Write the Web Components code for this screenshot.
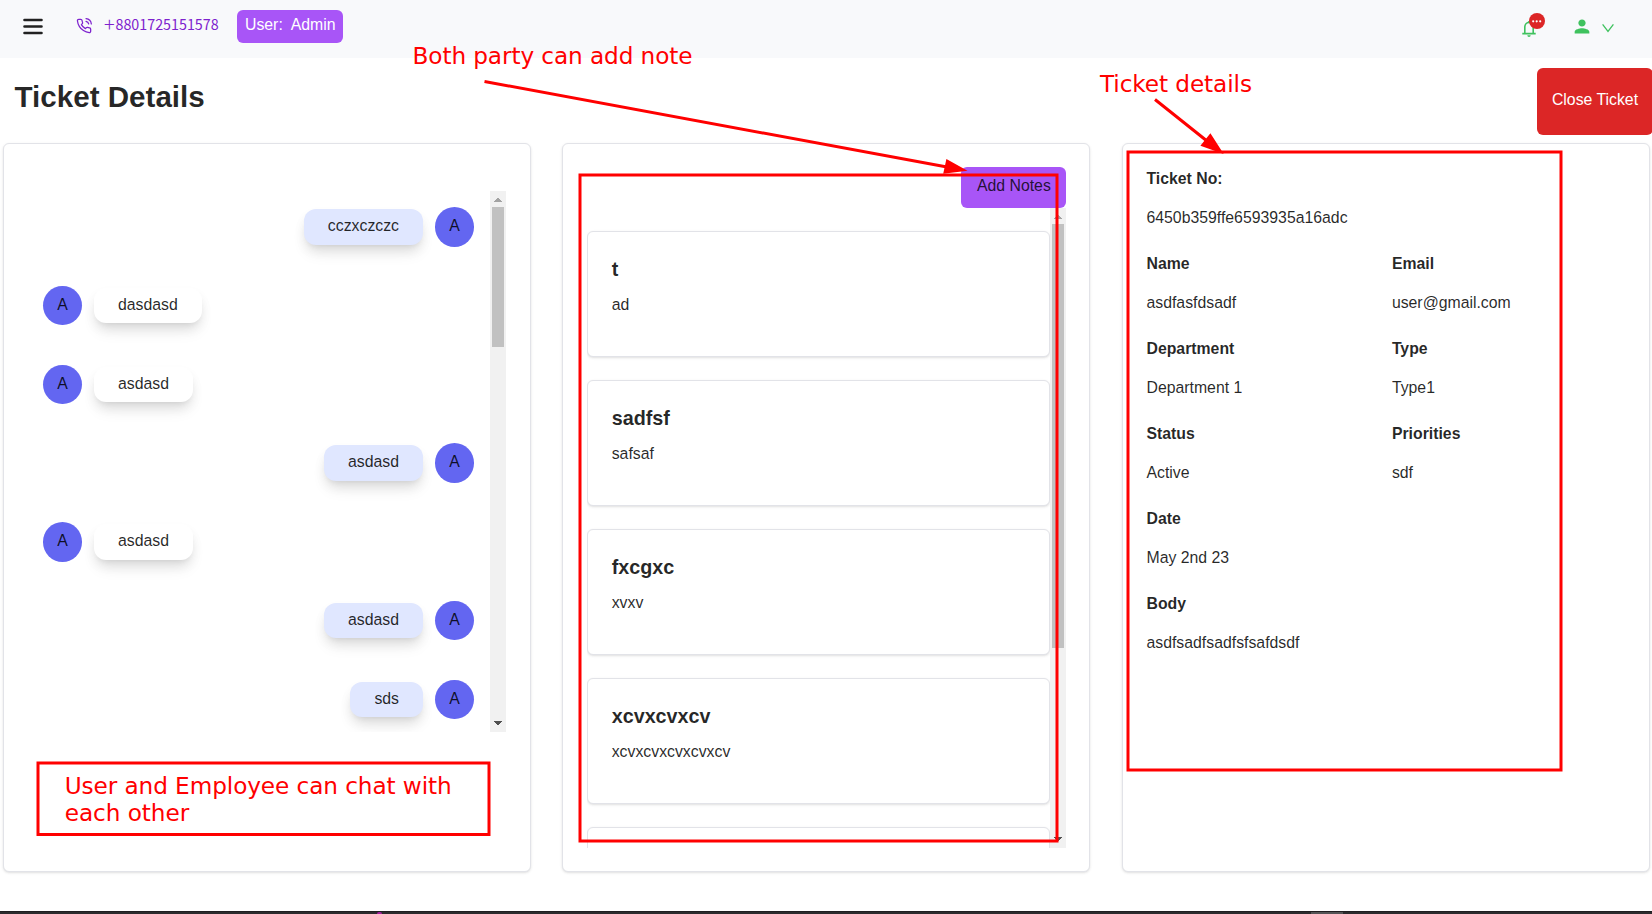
<!DOCTYPE html>
<html lang="en">
<head>
<meta charset="utf-8">
<title>Ticket Details</title>
<style>
  html, body { margin: 0; height: 914px; overflow: hidden; }
  body { font: 15.820px/24px "Liberation Sans", Arial, sans-serif; color: rgba(0,0,0,.85); background: #fff; }
</style>
</head>
<body>
<ticket-page></ticket-page>
<script>
const define = (name, html, setup) => {
  const tpl = document.createElement('template');
  tpl.innerHTML = html;
  customElements.define(name, class extends HTMLElement {
    constructor() {
      super();
      this.attachShadow({ mode: 'open' }).append(tpl.content.cloneNode(true));
    }
    connectedCallback() { if (setup) setup(this, this.shadowRoot); }
  });
};

define('scroll-track', `
<style>
  :host { display: flex; flex-direction: column; flex: 0 0 16px; width: 16px; background: #f1f1f1; }
  svg { display: block; flex: none; width: 16px; height: 16px; }
  .thumb { width: 12px; margin: 0 2px; height: var(--thumb); background: #c1c1c1; }
  .rest { flex: 1; }
</style>
<svg viewBox="0 0 16 16" shape-rendering="crispEdges"><path d="M4 11h8v-1h-1v-1h-1v-1h-1v-1h-2v1h-1v1h-1v1h-1z" fill="#a3a3a3"/></svg>
<div class="thumb"></div><div class="rest"></div>
<svg viewBox="0 0 16 16" shape-rendering="crispEdges"><path d="M4 5h8v1h-1v1h-1v1h-1v1h-2v-1h-1v-1h-1v-1h-1z" fill="#505050"/></svg>`);

define('app-header', `
<style>
  :host { display: flex; box-sizing: border-box; height: 58px; background: #f8f9fb; padding-left: 23px; align-items: flex-start; flex: none; }
  svg { display: block; flex: none; overflow: visible; }
  .menu { margin-top: 18px; }
  .phone { margin: 18px 0 0 33px; }
  .number { display: flex; margin: 12px 0 0 12px; width: 133px; font: 14.300px/24px "Noto Sans CJK JP", "Noto Sans CJK SC", sans-serif; color: #7e22ce; white-space: nowrap; }
  .plus { font-weight: 200; font-size: 20px; width: 11.500px; }
  .user { box-sizing: border-box; margin: 10px 0 0 0; height: 33px; width: 106px; padding: 2px 8px; border-radius: 6px; background: #a855f7; color: #fff; white-space: pre; line-height: 25px; }
  .bell { position: relative; margin: 19px 0 0 auto; }
  .badge { position: absolute; left: 7px; top: -6px; }
  .person { margin: 16px 0 0 35px; }
  .down { margin: 24px 0 0 9px; padding-right: 38px; }
</style>
<svg class="menu" width="20" height="17" viewBox="0 0 20 17" stroke="#212121" stroke-width="2.6" stroke-linecap="round"><path d="M1.5 2h17M1.5 8.5h17M1.5 15h17"/></svg>
<svg class="phone" width="16" height="16" viewBox="0 0 24 24" fill="none" stroke="#7e22ce" stroke-width="1.9" stroke-linecap="round" stroke-linejoin="round"><path d="M15.05 5A5 5 0 0 1 19 8.95M15.05 1A9 9 0 0 1 23 8.94m-1 7.98v3a2 2 0 0 1-2.18 2 19.79 19.79 0 0 1-8.63-3.07 19.5 19.5 0 0 1-6-6 19.79 19.79 0 0 1-3.07-8.67A2 2 0 0 1 4.11 2h3a2 2 0 0 1 2 1.72 12.84 12.84 0 0 0 .7 2.81 2 2 0 0 1-.45 2.11L8.09 9.91a16 16 0 0 0 6 6l1.27-1.27a2 2 0 0 1 2.11-.45 12.84 12.84 0 0 0 2.81.7A2 2 0 0 1 22 16.92z"/></svg>
<div class="number"><span class="plus">+</span><span>8801725151578</span></div>
<div class="user">User:  Admin</div>
<div class="bell">
  <svg width="14" height="18" viewBox="0 0 14 18"><path d="M2.8 14.5V8a4.2 4.6 0 0 1 8.4 0v6.5M0.3 14.6h13.4" fill="none" stroke="#3fc25e" stroke-width="1.6"/><path d="M7 2v1.6" stroke="#3fc25e" stroke-width="1.6"/><path d="M5.3 16.2h3.4a1.7 1.7 0 0 1-3.4 0z" fill="#3fc25e"/></svg>
  <svg class="badge" width="16" height="16" viewBox="0 0 16 16"><circle cx="8" cy="8" r="8" fill="#dc2626"/><g fill="#fff"><circle cx="4.2" cy="8.3" r="1.1"/><circle cx="7.7" cy="8.3" r="1.1"/><circle cx="11.2" cy="8.3" r="1.1"/></g></svg>
</div>
<svg class="person" width="22" height="21" viewBox="0 0 24 24" preserveAspectRatio="none"><path fill="#3fc25e" d="M12 12c2.21 0 4-1.79 4-4s-1.790-4-4-4-4 1.790-4 4 1.790 4 4 4zm0 2c-2.670 0-8 1.340-8 4v2h16v-2c0-2.660-5.330-4-8-4z"/></svg>
<svg class="down" width="12" height="9" viewBox="0 0 12 9"><path d="M.6.300l5.400 7.200 5.400-7.200" fill="none" stroke="#3fc25e" stroke-width="1.300"/></svg>`);

define('page-heading', `
<style>
  :host { display: flex; height: 85px; justify-content: space-between; flex: none; width: 1653px; }
  h1 { margin: 23px 0 0 14.500px; font-size: 29.600px; line-height: 32px; font-weight: 700; white-space: nowrap; }
  button { margin: 10px 0 0; width: 116px; height: 67px; border: 0; padding: 0 0 3px; border-radius: 6px; background: #dc2626; color: #fff; font: inherit; }
</style>
<h1><slot></slot></h1><button>Close Ticket</button>`);

define('panel-card', `
<style>
  :host { display: flex; flex-direction: column; box-sizing: border-box; border: 1px solid #e2e3e8; border-radius: 6px; background: #fff; box-shadow: 0 1px 3px rgba(0,0,0,.1), 0 1px 2px -1px rgba(0,0,0,.1); min-width: 0; }
</style><slot></slot>`);

define('chat-message', `
<style>
  :host { display: flex; align-items: center; gap: 12px; height: 39.500px; margin-bottom: 39.250px; flex: none; }
  :host([mine]) { flex-direction: row-reverse; }
  .avatar { box-sizing: border-box; width: 39px; height: 39.500px; border-radius: 50%; background: #6366f1; text-align: center; line-height: 38px; flex: none; }
  .bubble { box-sizing: border-box; height: 35.500px; padding: 0 24px; line-height: 34px; border-radius: 12px; background: #fff; box-shadow: 0 10px 15px -3px rgba(0,0,0,.1), 0 4px 6px -4px rgba(0,0,0,.1), 0 6px 12px rgba(0,0,0,.05); }
  :host([mine]) .bubble { background: #e0e7ff; }
</style>
<div class="avatar">A</div><div class="bubble"><slot></slot></div>`);

define('chat-panel', `
<style>
  :host { display: block; min-width: 0; }
  panel-card { height: 100%; padding: 47px 24px 0 23px; }
  .scroll { display: flex; height: 541px; }
  .list { flex: 1; padding: 16px; overflow: hidden; box-sizing: border-box; height: 541px; }
  scroll-track { --thumb: 140px; }
</style>
<panel-card><div class="scroll"><div class="list">
  <chat-message mine>cczxczczc</chat-message>
  <chat-message>dasdasd</chat-message>
  <chat-message>asdasd</chat-message>
  <chat-message mine>asdasd</chat-message>
  <chat-message>asdasd</chat-message>
  <chat-message mine>asdasd</chat-message>
  <chat-message mine>sds</chat-message>
</div><scroll-track></scroll-track></div></panel-card>`);

define('note-card', `
<style>
  :host { display: block; }
  panel-card { height: 126px; padding: 23px 23.300px 0; }
  h2 { margin: 0; font-size: 19.750px; line-height: 28px; font-weight: 700; }
  p { margin: 10px 0 0; line-height: 24px; }
</style>
<panel-card><h2></h2><p><slot></slot></p></panel-card>`, (el, root) => {
  root.querySelector('h2').textContent = el.getAttribute('heading');
});

define('notes-panel', `
<style>
  :host { display: block; min-width: 0; }
  panel-card { height: 100%; padding: 23px 23px 0 24px; }
  button { align-self: flex-end; flex: none; width: 105px; height: 41px; border: 0; border-radius: 6px; padding: 0 0 3px 0; background: #a855f7; font: inherit; color: rgba(0,0,0,.8); }
  .scroll { display: flex; height: 640px; }
  .list { flex: 1; padding-top: 23px; height: 617px; overflow: hidden; display: flex; flex-direction: column; gap: 23px; }
  note-card { flex: none; }
  scroll-track { --thumb: 424px; }
</style>
<panel-card><button>Add Notes</button>
<div class="scroll"><div class="list">
  <note-card heading="t">ad</note-card>
  <note-card heading="sadfsf">safsaf</note-card>
  <note-card heading="fxcgxc">xvxv</note-card>
  <note-card heading="xcvxcvxcv">xcvxcvxcvxcvxcv</note-card>
  <note-card heading=""></note-card>
</div><scroll-track></scroll-track></div></panel-card>`);

define('detail-field', `
<style>
  :host { display: block; height: 85px; }
  b, span { display: block; line-height: 24px; }
  b { margin-bottom: 15px; }
</style>
<b></b><span><slot></slot></span>`, (el, root) => {
  root.querySelector('b').textContent = el.getAttribute('label');
});

define('details-panel', `
<style>
  :host { display: block; min-width: 0; }
  panel-card { height: 100%; padding: 23px 24px 0 23.700px; }
  .grid { display: grid; grid-template-columns: 1fr 1fr; column-gap: 12.500px; }
  .wide { grid-column: 1 / -1; }
</style>
<panel-card><div class="grid">
  <detail-field class="wide" label="Ticket No:">6450b359ffe6593935a16adc</detail-field>
  <detail-field label="Name">asdfasfdsadf</detail-field>
  <detail-field label="Email">user@gmail.com</detail-field>
  <detail-field label="Department">Department 1</detail-field>
  <detail-field label="Type">Type1</detail-field>
  <detail-field label="Status">Active</detail-field>
  <detail-field label="Priorities">sdf</detail-field>
  <detail-field class="wide" label="Date">May 2nd 23</detail-field>
  <detail-field class="wide" label="Body">asdfsadfsadfsfsafdsdf</detail-field>
</div></panel-card>`);

define('dock-edge', `
<style>
  :host { display: flex; height: 3px; background: #2c2b2d; border-top: 0; flex: none; box-shadow: inset 0 1px #1f1e20; }
  .dot { width: 5px; height: 2px; margin: 1px 0 0 377px; border-radius: 3px 3px 0 0; background: #a61fa0; }
  .handle { width: 32px; height: 2px; margin: 1px 0 0 929px; background: #555456; }
</style>
<div class="dot"></div><div class="handle"></div>`);

define('markup-layer', `
<style>
  :host { position: absolute; left: 0; top: 0; width: 1652px; height: 914px; pointer-events: none; }
  svg { display: block; }
  text { font: 23.200px "DejaVu Sans", sans-serif; fill: #f00; }
</style>
<svg width="1652" height="914" viewBox="0 0 1652 914">
  <g fill="none" stroke="#f00" stroke-width="3">
    <rect x="38" y="763" width="451" height="71.500"/>
    <rect x="580" y="175" width="477" height="666"/>
    <rect x="1128" y="152" width="433" height="618"/>
    <path d="M484.500 81.500L947 167M1155 99.500L1207 141"/>
  </g>
  <path fill="#f00" d="M967.500 170.700L946.400 159 943.200 173.700zM1223.700 154L1210.400 133.300 1200.400 145.700z"/>
  <text x="412.500" y="64" textLength="280">Both party can add note</text>
  <text x="1100" y="92" textLength="152">Ticket details</text>
  <text x="64.700" y="793.500" textLength="387">User and Employee can chat with</text>
  <text x="64.700" y="820.500" textLength="124.500">each other</text>
</svg>`);

define('ticket-page', `
<style>
  :host { display: flex; flex-direction: column; position: relative; width: 1652px; height: 914px; overflow: hidden; }
  .columns { display: grid; grid-template-columns: 528px 528px 528px; column-gap: 31.400px; padding-left: 3px; height: 729px; margin-bottom: 39px; flex: none; }
</style>
<app-header></app-header>
<page-heading>Ticket Details</page-heading>
<div class="columns"><chat-panel></chat-panel><notes-panel></notes-panel><details-panel></details-panel></div>
<dock-edge></dock-edge>
<markup-layer></markup-layer>`);
</script>
</body>
</html>
